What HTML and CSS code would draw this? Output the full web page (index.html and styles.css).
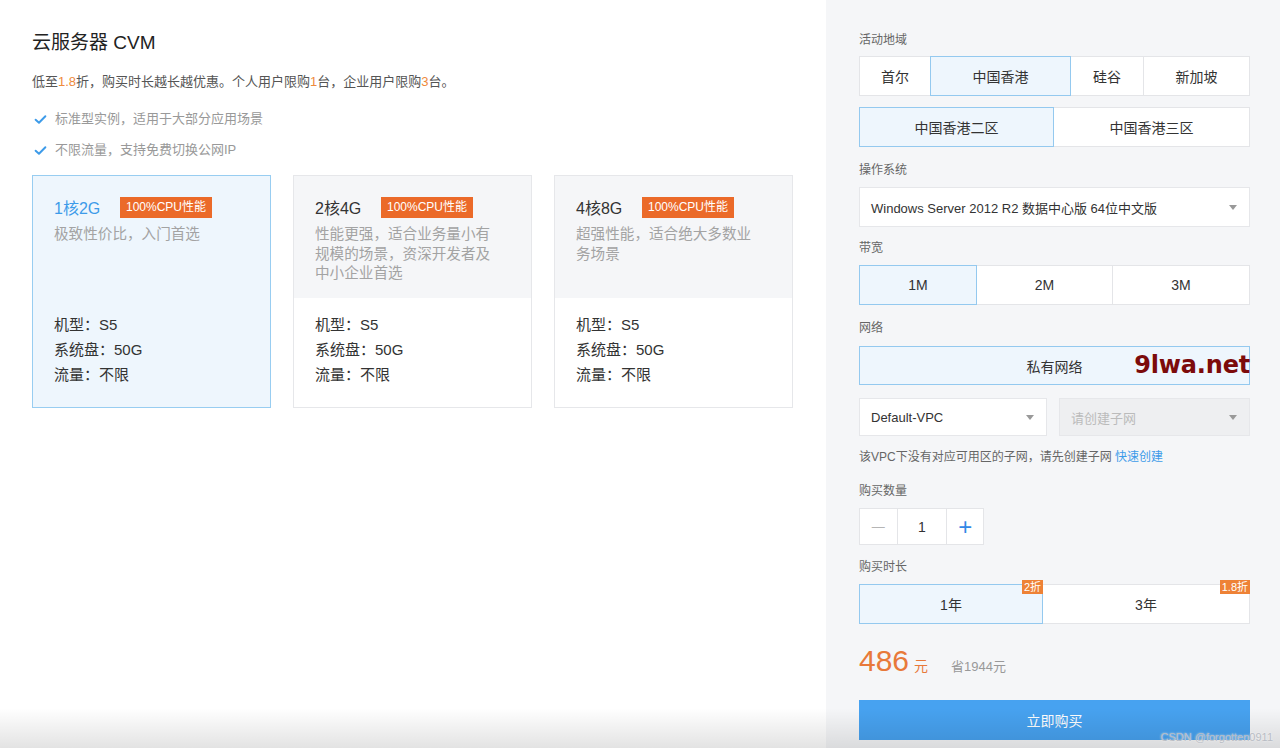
FILE: index.html
```html
<!DOCTYPE html>
<html lang="zh-CN">
<head>
<meta charset="utf-8">
<title>云服务器 CVM</title>
<link rel="stylesheet" href="styles.css">
</head>
<body>
<div class="page">
  <main class="left">
    <h1 class="title">云服务器 CVM</h1>
    <p class="sub">低至<span class="hl">1.8</span>折，购买时长越长越优惠。个人用户限购<span class="hl">1</span>台，企业用户限购<span class="hl">3</span>台。</p>
    <p class="check check-first"><svg class="tick" viewBox="0 0 12 12"><polyline points="1.5,6.2 4.6,9 10.5,3" /></svg>标准型实例，适用于大部分应用场景</p>
    <p class="check"><svg class="tick" viewBox="0 0 12 12"><polyline points="1.5,6.2 4.6,9 10.5,3" /></svg>不限流量，支持免费切换公网IP</p>

    <div class="cards">
      <div class="card selected">
        <div class="card-top">
          <div class="card-title"><span class="name">1核2G</span><span class="badge">100%CPU性能</span></div>
          <p class="desc">极致性价比，入门首选</p>
        </div>
        <div class="card-bottom">
          <p>机型：S5</p>
          <p>系统盘：50G</p>
          <p>流量：不限</p>
        </div>
      </div>
      <div class="card">
        <div class="card-top">
          <div class="card-title"><span class="name">2核4G</span><span class="badge">100%CPU性能</span></div>
          <p class="desc">性能更强，适合业务量小有规模的场景，资深开发者及中小企业首选</p>
        </div>
        <div class="card-bottom">
          <p>机型：S5</p>
          <p>系统盘：50G</p>
          <p>流量：不限</p>
        </div>
      </div>
      <div class="card">
        <div class="card-top">
          <div class="card-title"><span class="name">4核8G</span><span class="badge">100%CPU性能</span></div>
          <p class="desc">超强性能，适合绝大多数业务场景</p>
        </div>
        <div class="card-bottom">
          <p>机型：S5</p>
          <p>系统盘：50G</p>
          <p>流量：不限</p>
        </div>
      </div>
    </div>
  </main>

  <aside class="right">
    <div class="label l-region">活动地域</div>
    <div class="seg">
      <div class="opt w72">首尔</div>
      <div class="opt w140 on">中国香港</div>
      <div class="opt w73">硅谷</div>
      <div class="opt w106">新加坡</div>
    </div>
    <div class="seg seg-zone">
      <div class="opt w195 on">中国香港二区</div>
      <div class="opt w196">中国香港三区</div>
    </div>

    <div class="label l-os">操作系统</div>
    <div class="select os">
      <span>Windows Server 2012 R2 数据中心版 64位中文版</span><i class="caret"></i>
    </div>

    <div class="label l-bw">带宽</div>
    <div class="seg">
      <div class="opt w118 on">1M</div>
      <div class="opt w136">2M</div>
      <div class="opt w137">3M</div>
    </div>

    <div class="label l-net">网络</div>
    <div class="seg net">
      <div class="opt w391 on">私有网络</div>
      <span class="wm">9lwa.net</span>
    </div>
    <div class="vpc-row">
      <div class="select vpc"><span>Default-VPC</span><i class="caret"></i></div>
      <div class="select subnet disabled"><span>请创建子网</span><i class="caret"></i></div>
    </div>
    <p class="note">该VPC下没有对应可用区的子网，请先创建子网 <a class="link">快速创建</a></p>

    <div class="label l-qty">购买数量</div>
    <div class="stepper">
      <div class="st minus">&#8212;</div>
      <div class="st val">1</div>
      <div class="st plus">+</div>
    </div>

    <div class="label l-dur">购买时长</div>
    <div class="seg">
      <div class="opt w184 on">1年<span class="disc">2折</span></div>
      <div class="opt w208">3年<span class="disc">1.8折</span></div>
    </div>

    <div class="price"><span class="num">486</span><span class="yuan">元</span><span class="save">省1944元</span></div>
    <div class="buy">立即购买</div>
  </aside>
</div>
<div class="fade"></div>
<div class="csdn">CSDN @forgotten0911</div>
</body>
</html>
```

FILE: styles.css
```css
* { box-sizing: border-box; }
html, body { margin: 0; padding: 0; }
body {
  width: 1280px;
  height: 748px;
  overflow: hidden;
  position: relative;
  font-family: "Liberation Sans", "Noto Sans CJK SC", sans-serif;
  color: #333;
  background: #fff;
}
p { margin: 0; }
.page { display: flex; height: 748px; }

.left {
  width: 826px;
  flex: none;
  padding: 31px 0 0 32px;
  background: #fff;
}
.title {
  margin: 0;
  font-size: 19px;
  line-height: 24px;
  font-weight: normal;
  color: #222;
}
.sub {
  margin-top: 17px;
  font-size: 13px;
  line-height: 20px;
  color: #555;
}
.hl { color: #ee8a3c; }
.check {
  display: flex;
  align-items: center;
  margin-top: 11px;
  font-size: 13px;
  line-height: 20px;
  color: #999;
}
.check-first { margin-top: 17px; }
.tick {
  width: 13px;
  height: 13px;
  margin: 0 8px 0 2px;
  fill: none;
  stroke: #3d9be9;
  stroke-width: 1.8;
  stroke-linecap: round;
  stroke-linejoin: round;
}

.cards {
  display: flex;
  gap: 22px;
  margin-top: 15px;
}
.card {
  width: 239px;
  height: 233px;
  border: 1px solid #e6e7ea;
  background: #fff;
  display: flex;
  flex-direction: column;
}
.card.selected {
  border-color: #98cdf1;
  background: #eef6fd;
}
.card-top {
  height: 122px;
  background: #f5f6f8;
  padding: 19px 0 0 21px;
}
.card.selected .card-top { background: transparent; }
.card-title {
  display: flex;
  align-items: center;
  height: 24px;
}
.name {
  font-size: 16px;
  color: #333;
  width: 66px;
}
.selected .name { color: #3d9be9; }
.badge {
  display: inline-block;
  height: 21px;
  line-height: 21px;
  padding: 0 6px;
  background: #eb6a29;
  color: #fff;
  font-size: 12px;
}
.desc {
  margin-top: 6px;
  width: 186px;
  font-size: 14.6px;
  line-height: 19.5px;
  color: #a3a3a3;
}
.card-bottom {
  padding: 14px 0 0 21px;
}
.card-bottom p {
  font-size: 15px;
  line-height: 25px;
  color: #333;
}

.right {
  width: 454px;
  flex: none;
  background: #f5f6f8;
  padding: 32px 30px 0 33px;
  position: relative;
}
.label {
  font-size: 12px;
  line-height: 16px;
  color: #666;
  margin-bottom: 8px;
}
.l-os { margin-top: 15px; margin-bottom: 9px; }
.l-bw { margin-top: 13px; margin-bottom: 9px; }
.l-net { margin-top: 15px; margin-bottom: 10px; }
.l-qty { margin-top: 17px; margin-bottom: 9px; }
.l-dur { margin-top: 14px; margin-bottom: 9px; }

.seg {
  display: flex;
  position: relative;
}
.seg-zone { margin-top: 11px; }
.opt {
  height: 40px;
  display: flex;
  align-items: center;
  justify-content: center;
  background: #fff;
  border: 1px solid #e4e5e8;
  margin-left: -1px;
  font-size: 14px;
  color: #333;
  position: relative;
}
.opt:first-child { margin-left: 0; }
.opt.on {
  background: #eef6fd;
  border-color: #94c9ef;
  z-index: 1;
}
.w72 { width: 72px; }
.w140 { width: 141px; }
.w73 { width: 74px; }
.w106 { width: 107px; }
.w195 { width: 195px; }
.w196 { width: 197px; }
.w118 { width: 118px; }
.w136 { width: 137px; }
.w137 { width: 138px; }
.w391 { width: 391px; }
.w184 { width: 184px; }
.w208 { width: 208px; }
.net .opt { height: 39px; }

.wm {
  position: absolute;
  right: 0;
  top: 5px;
  z-index: 2;
  font-family: "DejaVu Sans", sans-serif;
  font-weight: bold;
  font-size: 24px;
  line-height: 28px;
  color: #7c0b0b;
  letter-spacing: -0.2px;
}

.select {
  height: 40px;
  background: #fff;
  border: 1px solid #e6e7ea;
  display: flex;
  align-items: center;
  justify-content: space-between;
  padding: 0 12px 0 11px;
  font-size: 13px;
  color: #333;
}
.caret {
  width: 0;
  height: 0;
  border-left: 4px solid transparent;
  border-right: 4px solid transparent;
  border-top: 5px solid #999;
}
.vpc-row {
  display: flex;
  justify-content: space-between;
  margin-top: 13px;
}
.vpc-row .select { height: 38px; }
.vpc { width: 188px; }
.subnet { width: 191px; }
.select.disabled {
  background: #eeeff1;
  border-color: #e6e7ea;
  color: #bbb;
}
.note {
  margin-top: 12px;
  font-size: 12px;
  line-height: 18px;
  color: #666;
}
.link { color: #3d9be9; }

.stepper {
  display: flex;
  width: 125px;
}
.st {
  height: 37px;
  background: #fff;
  border: 1px solid #e4e5e8;
  margin-left: -1px;
  display: flex;
  align-items: center;
  justify-content: center;
  font-size: 14px;
  color: #333;
}
.st:first-child { margin-left: 0; }
.minus { width: 39px; color: #b5b5b5; font-size: 13px; }
.val { width: 51px; }
.plus { width: 38px; color: #3388e6; font-size: 24px; font-weight: 300; }

.disc {
  position: absolute;
  right: -1px;
  top: -5px;
  height: 14px;
  line-height: 14px;
  padding: 0 2px;
  background: #ee8236;
  color: #fff;
  font-size: 11px;
}

.price {
  display: flex;
  align-items: baseline;
  margin-top: 19px;
  height: 36px;
}
.num {
  font-size: 30px;
  line-height: 36px;
  color: #e8793a;
}
.yuan {
  font-size: 14px;
  color: #e8793a;
  margin-left: 5px;
}
.save {
  font-size: 13px;
  color: #999;
  margin-left: 23px;
}
.buy {
  margin-top: 21px;
  height: 40px;
  width: 391px;
  background: #47a2f0;
  color: #fff;
  font-size: 14px;
  display: flex;
  align-items: center;
  justify-content: center;
}

.fade {
  position: absolute;
  left: 0;
  right: 0;
  bottom: 0;
  height: 40px;
  background: linear-gradient(to bottom, rgba(0,0,0,0), rgba(0,0,0,0.11));
  pointer-events: none;
}
.csdn {
  position: absolute;
  right: 7px;
  bottom: 4px;
  font-size: 11px;
  line-height: 13px;
  color: #b8bcc4;
  text-shadow: 0 0 2px rgba(255,255,255,0.8);
  font-family: "Liberation Sans", sans-serif;
}
```
